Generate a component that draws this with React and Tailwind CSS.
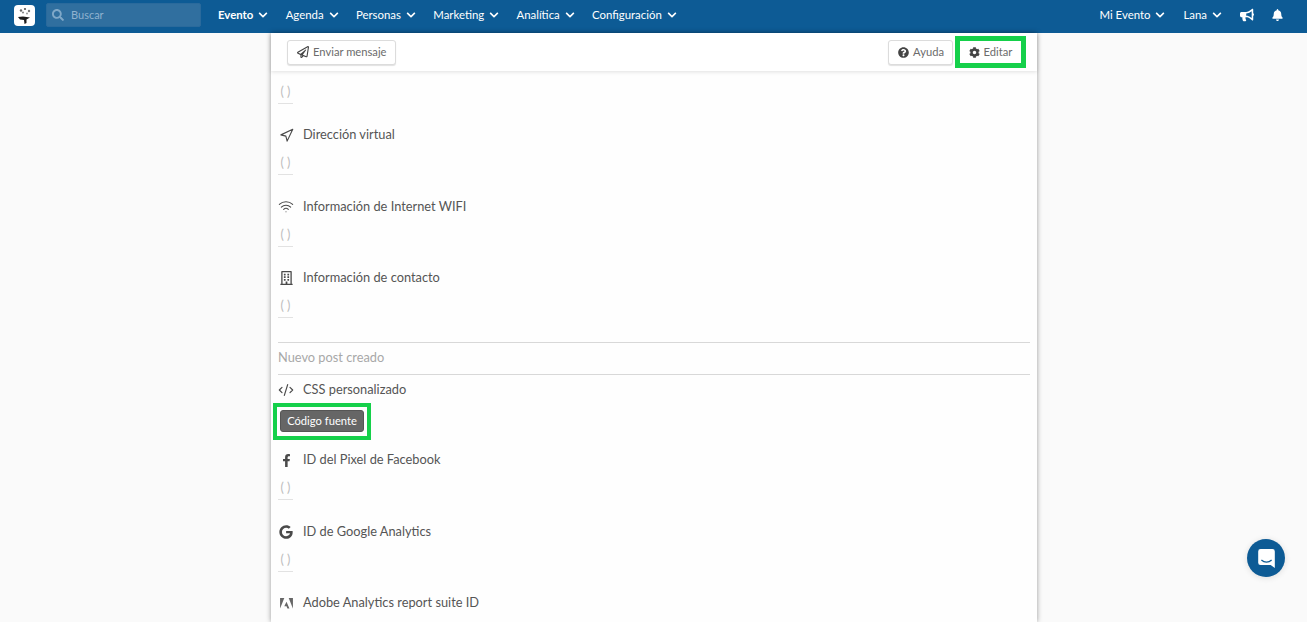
import React from "react";
import { FaChevronDown, FaSearch, FaRegPaperPlane, FaQuestionCircle, FaCog, FaBullhorn, FaBell, FaRegBuilding, FaFacebookF, FaGoogle } from "react-icons/fa";
import { Navigation, Wifi, CodeXml } from "lucide-react";

const font = { fontFamily: "Lato, 'Liberation Sans', sans-serif" };

function NavItem({ label, bold }) {
  return (
    <div className={"flex items-center gap-[5px] text-[11.4px] text-white " + (bold ? "font-bold" : "")}>
      <span>{label}</span>
      <FaChevronDown className="w-[10px] h-[10px]" />
    </div>
  );
}

function Btn({ icon, label }) {
  return (
    <button className="h-[25px] flex items-center gap-[4px] pl-[9px] pr-[8px] bg-white border border-[#dcdcdc] rounded-[3px] text-[11.2px] text-[#6b6b6b] shadow-[0_1px_1px_rgba(0,0,0,0.12)]">
      {icon}
      <span>{label}</span>
    </button>
  );
}

function Value({ className = "" }) {
  return (
    <div className={"w-[15px] h-[24px] border-b border-[#e2e2e2] text-[12.5px] leading-[23px] text-[#bcbcbc] flex justify-center " + className}>( )</div>
  );
}

function Label({ icon, text }) {
  return (
    <div className="h-[18px] flex items-center text-[12.8px] text-[#555555]">
      <span className="w-[16px] flex justify-center text-[#4a4a4a]">{icon}</span>
      <span className="ml-[9px]">{text}</span>
    </div>
  );
}

function Row({ icon, text }) {
  return (
    <div className="h-[71.5px]">
      <Label icon={icon} text={text} />
      <Value className="mt-[7px]" />
    </div>
  );
}

function Logo() {
  return (
    <div className="w-[21px] h-[21px] rounded-[4px] bg-white flex items-center justify-center">
      <svg viewBox="0 0 21 21" className="w-[21px] h-[21px]">
        <circle cx="7" cy="5.5" r="1.2" fill="#666" />
        <circle cx="11" cy="4" r="1.1" fill="#555" />
        <circle cx="15" cy="6" r="1.2" fill="#777" />
        <circle cx="9" cy="7.5" r="1.1" fill="#888" />
        <circle cx="13" cy="8.5" r="1" fill="#999" />
        <path d="M4 12 L9 11.5 L16 12.5 L12.5 14.5 L12.5 18 L10.5 19 L10 15 L6 14.5 Z" fill="#1c1c1c" />
      </svg>
    </div>
  );
}

function AdobeIcon() {
  return (
    <svg viewBox="0 0 14 12" className="w-[13px] h-[11px] text-[#666]" fill="currentColor">
      <path d="M0 0 H4.6 L0 11.5 Z" />
      <path d="M9.4 0 H14 V11.5 Z" />
      <path d="M7 4 L10.2 11.5 H8 L7 9 H4.6 Z" />
    </svg>
  );
}

export default function App() {
  return (
    <div style={font} className="h-screen overflow-hidden flex flex-col bg-[#fafafa] relative">
      <header className="h-[33px] shrink-0 bg-[#0d5b95] flex items-center pl-[14px] pr-[24px] pb-[3px]">
        <Logo />
        <div className="ml-[11px] w-[155px] h-[24px] rounded-[2px] bg-[#306f9f] border border-[#2a6a9c] flex items-center pl-[5px]">
          <FaSearch className="w-[12px] h-[12px] text-[#7fa8c8]" />
          <span className="ml-[7px] text-[11px] text-[#8fb2cf]">Buscar</span>
        </div>
        <nav className="ml-[17px] flex items-center gap-[17.3px]">
          <NavItem label="Evento" bold />
          <NavItem label="Agenda" />
          <NavItem label="Personas" />
          <NavItem label="Marketing" />
          <NavItem label="Analítica" />
          <NavItem label="Configuración" />
        </nav>
        <div className="ml-auto flex items-center">
          <NavItem label="Mi Evento" />
          <div className="ml-[18px]"><NavItem label="Lana" /></div>
          <FaBullhorn className="ml-[18px] w-[14px] h-[14px] text-white" />
          <FaBell className="ml-[18px] w-[11px] h-[12px] text-white" />
        </div>
      </header>

      <main className="w-[766px] ml-[271px] flex-1 min-h-0 bg-[#fefefe] shadow-[0_0_5px_rgba(0,0,0,0.4)] flex flex-col">
        <div className="h-[38px] shrink-0 bg-white shadow-[0_1px_4px_rgba(0,0,0,0.12)] flex items-center pl-[16px] pr-[11px] relative">
          <Btn icon={<FaRegPaperPlane className="w-[12px] h-[12px] text-[#444]" />} label="Enviar mensaje" />
          <div className="ml-auto flex items-center gap-[2px]">
            <Btn icon={<FaQuestionCircle className="w-[11px] h-[11px] text-[#444]" />} label="Ayuda" />
            <div className="w-[71px] h-[32px] border-[5px] border-[#15d04a] flex items-center justify-center gap-[4px] text-[11.2px] text-[#6b6b6b]">
              <FaCog className="w-[11px] h-[11px] text-[#444]" />
              <span>Editar</span>
            </div>
          </div>
        </div>

        <div className="flex-1 min-h-0 overflow-hidden px-[7px]">
          <Value className="mt-[9px]" />
          <div className="mt-[22px]">
            <Row icon={<Navigation className="w-[15px] h-[15px]" strokeWidth={1.8} />} text="Dirección virtual" />
            <Row icon={<Wifi className="w-[17px] h-[17px]" strokeWidth={1.6} />} text="Información de Internet WIFI" />
            <Row icon={<FaRegBuilding className="w-[13px] h-[14px]" />} text="Información de contacto" />
          </div>
          <div className="mt-[1px] h-[33px] border-y border-[#d8d8d8] flex items-center text-[12.8px] text-[#a8a8a8]">Nuevo post creado</div>
          <div className="mt-[6px]">
            <Label icon={<CodeXml className="w-[16px] h-[16px]" strokeWidth={1.8} />} text="CSS personalizado" />
          </div>
          <div className="mt-[4px] ml-[-5px] w-[98px] h-[37px] border-[4px] border-[#15d04a] flex items-center justify-center">
            <span className="w-[84px] h-[22px] rounded-[3px] bg-[#666666] border border-[#555] text-white text-[11.2px] flex items-center justify-center">Código fuente</span>
          </div>
          <div className="mt-[11.5px]">
            <Row icon={<FaFacebookF className="w-[13px] h-[13px]" />} text="ID del Pixel de Facebook" />
            <Row icon={<FaGoogle className="w-[14px] h-[14px]" />} text="ID de Google Analytics" />
            <Label icon={<AdobeIcon />} text="Adobe Analytics report suite ID" />
          </div>
        </div>
      </main>

      <div className="absolute left-[1247px] top-[539px] w-[38px] h-[38px] rounded-full bg-[#0d5b95] flex items-center justify-center shadow-[0_1px_6px_rgba(0,0,0,0.12)]">
        <svg viewBox="0 0 28 32" className="w-[17px] h-[19px]">
          <path d="M4 0 H24 A4 4 0 0 1 28 4 V32 L21 27 H4 A4 4 0 0 1 0 23 V4 A4 4 0 0 1 4 0 Z" fill="#fff" />
          <path d="M6 19 C10 23 18 23 22 19" fill="none" stroke="#0d5b95" strokeWidth="2" strokeLinecap="round" />
        </svg>
      </div>
    </div>
  );
}
